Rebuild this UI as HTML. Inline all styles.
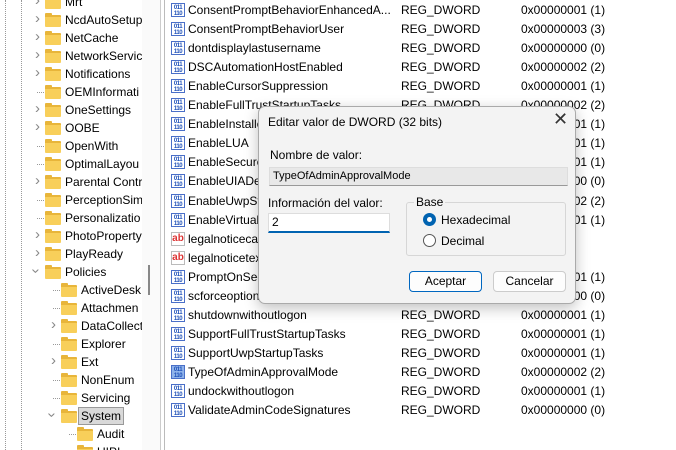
<!DOCTYPE html><html><head><style>
*{margin:0;padding:0;box-sizing:border-box}
body{width:676px;height:450px;overflow:hidden;background:#fff;font-family:"Liberation Sans",sans-serif;font-size:12px;color:#000;position:relative}
.t{position:absolute;height:18px;line-height:18px;white-space:nowrap}
.f{position:absolute;width:16px;height:12px;background:#f8cf5a;border-top:2px solid #e8b53a;border-radius:1px}
.f:before{content:"";position:absolute;left:0;top:-4px;width:7px;height:3px;background:#e8b53a;border-radius:1px 1px 0 0}
.ch{position:absolute;color:#888;font-size:15px;line-height:18px;height:18px}
.vd{position:absolute;border-left:1px dotted #999;top:0;height:450px}
.ic{position:absolute;left:171px;width:14px;height:14px;border:1px solid #4a6fc8;background:#fff;font-size:6px;line-height:6px;color:#1d4fb8;font-weight:bold;text-align:center;letter-spacing:-0.5px;padding-top:1px}
.ab{position:absolute;left:171px;width:14px;height:14px;border:1px solid #bbb;background:#fff;color:#d33;font-size:10px;font-weight:bold;line-height:12px;text-align:center}
</style></head><body>
<div class="vd" style="left:5px"></div><div class="vd" style="left:21px"></div>
<div style="position:absolute;left:142px;top:0;width:18px;height:450px;background:#fafafa"></div>
<div style="position:absolute;left:148px;top:265px;width:2px;height:30px;background:#888"></div>
<div style="position:absolute;left:160px;top:0;width:1px;height:450px;background:#ccc"></div>
<div style="position:absolute;left:164px;top:0;width:1px;height:450px;background:#bbb"></div>
<div id="tree" style="position:absolute;left:0;top:0;width:142px;height:450px;overflow:hidden"></div>
<div id="list"></div>
<div style="position:absolute;left:258px;top:106px;width:318px;height:198px;background:#f3f3f3;border:1px solid #aaa;border-radius:7px;box-shadow:0 4px 14px rgba(0,0,0,.25)">
 <div style="position:absolute;left:9px;top:8px;font-size:12px">Editar valor de DWORD (32 bits)</div>
 <div style="position:absolute;left:294px;top:2px;font-size:18px;color:#333">✕</div>
 <div style="position:absolute;left:11px;top:41px">Nombre de valor:</div>
 <div style="position:absolute;left:10px;top:60px;width:299px;height:19px;background:#e8e8e8;border:1px solid #ddd;border-bottom-color:#999;line-height:17px;padding-left:3px;font-size:11px">TypeOfAdminApprovalMode</div>
 <div style="position:absolute;left:9px;top:89px">Información del valor:</div>
 <div style="position:absolute;left:9px;top:106px;width:122px;height:20px;background:#fff;border:1px solid #ddd;border-bottom:2px solid #0063b1;line-height:17px;padding-left:3px">2</div>
 <div style="position:absolute;left:147px;top:95px;width:160px;height:54px;border:1px solid #d6d6d6;border-radius:3px"></div>
 <div style="position:absolute;left:155px;top:88px;background:#f3f3f3;padding:0 2px">Base</div>
 <div style="position:absolute;left:164px;top:106px;width:13px;height:13px;border-radius:50%;background:#0063b1"><div style="margin:4px;width:5px;height:5px;border-radius:50%;background:#fff"></div></div>
 <div style="position:absolute;left:182px;top:106px">Hexadecimal</div>
 <div style="position:absolute;left:164px;top:127px;width:13px;height:13px;border-radius:50%;border:1px solid #555;background:#fff"></div>
 <div style="position:absolute;left:182px;top:127px">Decimal</div>
 <div style="position:absolute;left:150px;top:164px;width:73px;height:21px;background:#fdfdfd;border:1px solid #0067c0;border-radius:4px;text-align:center;line-height:19px">Aceptar</div>
 <div style="position:absolute;left:234px;top:164px;width:73px;height:21px;background:#fdfdfd;border:1px solid #ccc;border-radius:4px;text-align:center;line-height:19px">Cancelar</div>
</div>
<script>
var tr=[["Mrt",1,1],["NcdAutoSetup",1,1],["NetCache",1,1],["NetworkServic",1,1],["Notifications",1,1],["OEMInformati",1,0],["OneSettings",1,1],["OOBE",1,1],["OpenWith",1,0],["OptimalLayou",1,0],["Parental Contr",1,1],["PerceptionSim",1,0],["Personalizatio",1,0],["PhotoProperty",1,1],["PlayReady",1,1],["Policies",1,2],["ActiveDesk",2,0],["Attachmen",2,0],["DataCollect",2,1],["Explorer",2,0],["Ext",2,1],["NonEnum",2,0],["Servicing",2,0],["System",2,2],["Audit",3,0],["UIPI",3,0]];
var h="";tr.forEach(function(r,i){var y=-7+i*18,l=r[1],fx=45+(l-1)*16;
if(r[2]==1)h+='<div class="ch" style="left:'+(fx-10)+'px;top:'+(y-1)+'px">&#x203A;</div>';
else if(r[2]==2)h+='<div class="ch" style="left:'+(fx-12)+'px;top:'+(y-1)+'px;transform:rotate(90deg)">&#x203A;</div>';
else h+='<div style="position:absolute;left:'+(fx-8)+'px;top:'+(y+9)+'px;width:7px;border-top:1px dotted #999"></div>';
h+='<div class="f" style="left:'+fx+'px;top:'+(y+4)+'px"></div>';
var sel=r[0]=="System"?'background:#d9d9d9;border:1px solid #999;padding:0 2px;line-height:16px;':'';
h+='<div class="t" style="left:'+(fx+20-(sel?3:0))+'px;top:'+y+'px;'+sel+'">'+r[0]+'</div>';});
document.getElementById("tree").innerHTML=h;
var L=[["ConsentPromptBehaviorEnhancedA...","0x00000001 (1)"],["ConsentPromptBehaviorUser","0x00000003 (3)"],["dontdisplaylastusername","0x00000000 (0)"],["DSCAutomationHostEnabled","0x00000002 (2)"],["EnableCursorSuppression","0x00000001 (1)"],["EnableFullTrustStartupTasks","0x00000002 (2)"],["EnableInstallerDetection","0x00000001 (1)"],["EnableLUA","0x00000001 (1)"],["EnableSecureUIAPaths","0x00000001 (1)"],["EnableUIADesktopToggle","0x00000000 (0)"],["EnableUwpStartupTasks","0x00000002 (2)"],["EnableVirtualization","0x00000001 (1)"],["legalnoticecaption","",1],["legalnoticetext","",1],["PromptOnSecureDesktop","0x00000001 (1)"],["scforceoption","0x00000000 (0)"],["shutdownwithoutlogon","0x00000001 (1)"],["SupportFullTrustStartupTasks","0x00000001 (1)"],["SupportUwpStartupTasks","0x00000001 (1)"],["TypeOfAdminApprovalMode","0x00000002 (2)"],["undockwithoutlogon","0x00000001 (1)"],["ValidateAdminCodeSignatures","0x00000000 (0)"]];
h="";L.forEach(function(r,i){var y=1+i*19.05;
h+=r[2]?'<div class="ab" style="top:'+(y+2)+'px">ab</div>':'<div class="ic" style="top:'+(y+2)+'px;'+(i==19?'background:#8fb3ea':'')+'">011<br>110</div>';
h+='<div class="t" style="left:188px;top:'+y+'px">'+r[0]+'</div>';
h+='<div class="t" style="left:401px;top:'+y+'px">'+(r[2]?'REG_SZ':'REG_DWORD')+'</div>';
h+='<div class="t" style="left:521px;top:'+y+'px">'+r[1]+'</div>';});
document.getElementById("list").innerHTML=h;
</script>
</body></html>
